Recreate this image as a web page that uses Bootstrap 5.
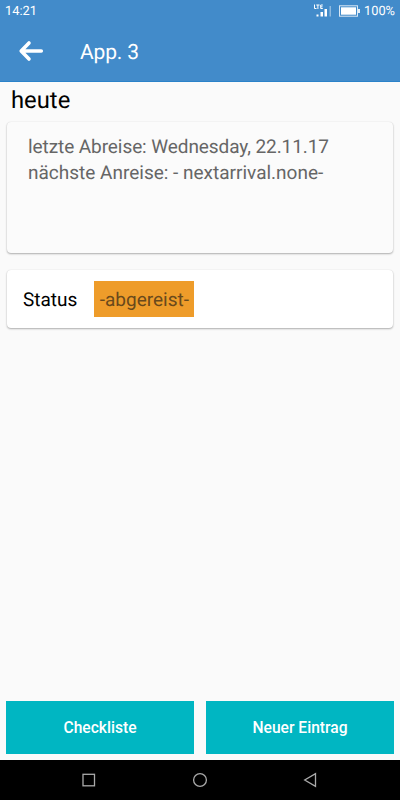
<!DOCTYPE html>
<html lang="de">
<head>
<meta charset="utf-8">
<meta name="viewport" content="width=device-width, initial-scale=1">
<title>App. 3</title>
<link href="https://cdn.jsdelivr.net/npm/bootstrap@5.3.0/dist/css/bootstrap.min.css" rel="stylesheet">
<style>
body { font-family: Roboto, sans-serif; background: #fafafa; color: #000; height: 800px; overflow: hidden; text-rendering: geometricPrecision; }
svg { display: block; flex: none; }
.app-head { background: #428bca; height: 82px; border-bottom: 1px solid #2a82c9; }
.status-bar { height: 21px; padding: 0 5px; font-size: 12.8px; line-height: 21px; }
.status-bar span { padding-top: 1px; }
.battery { margin: 0 4px 0 7px; }
.toolbar { height: 60px; padding: 0 19px 0 18px; }
.toolbar h1 { font-size: 21px; letter-spacing: -.15px; line-height: 26px; margin: 3px 0 0 36px; }
.day-title { font-size: 23.8px; line-height: 28px; margin: 4px 0 0 11px; height: 36px; }
.panel { margin: 0 7px; border: 0; border-radius: 4px; box-shadow: 0 1px 2px rgba(0,0,0,.3), 0 0 1px rgba(0,0,0,.12); }
.panel-stay { background: #fbfbfb; height: 131px; padding: 12px 21px; color: #666; font-size: 19px; line-height: 26px; }
.last-departure { letter-spacing: -.08px; }
.panel-status { height: 58px; margin-top: 17px; padding-left: 16px; font-size: 19px; }
.state-name { padding-top: 2px; }
.state-label { background: #ee9c2a; color: #69491c; height: 36px; line-height: 37px; margin-left: 17px; width: 100px; text-align: center; }
.actions { padding: 0 6px 6px; gap: 12px; }
.btn-action { --bs-btn-bg: #00b6c2; --bs-btn-color: #fff; --bs-btn-hover-bg: #00a5b0; --bs-btn-hover-color: #fff; height: 53px; font-size: 15.6px; font-weight: 500; border: 0; padding-top: 9px; }
.sys-nav { background: #000; height: 40px; }
</style>
</head>
<body class="d-flex flex-column">
<header class="app-head text-white flex-shrink-0">
  <div class="status-bar d-flex align-items-center">
    <span>14:21</span>
    <svg class="ms-auto" width="19" height="14" viewBox="0 0 19 14" fill="none">
      <path d="M1.500 .5V4.500H3.500M3.300 1H6.500M4.900 1V5M9.800 1H7.700V4.500H9.800M7.700 2.800H9.500" stroke="#fff"/>
      <path d="M3.500 10.500h2v2h-2zM7.500 8H10v4.500H7.500zM11.500 5H14v7.500h-2.500z" fill="#fff"/>
      <path d="M16.500 2H18v10.500h-1.500z" fill="#fff" opacity=".4"/>
    </svg>
    <svg class="battery" width="21" height="12" viewBox="0 0 21 12">
      <rect x=".5" y=".8" width="18" height="10.400" fill="none" stroke="#fff" stroke-opacity=".8"/>
      <rect x="2" y="2.300" width="15" height="7.400" fill="#fff"/>
      <path d="M19 4h2v4h-2z" fill="#fff" opacity=".85"/>
    </svg>
    <span>100%</span>
  </div>
  <div class="toolbar d-flex align-items-center">
    <svg width="26" height="22" viewBox="0 0 26 22" fill="none" stroke="#fff" stroke-width="3.600" stroke-linecap="round" stroke-linejoin="round"><path d="M11 3L3.200 11L11 19M3.500 11H23.300"/></svg>
    <h1 class="fw-normal">App. 3</h1>
  </div>
</header>
<main class="flex-grow-1">
  <h2 class="day-title fw-normal">heute</h2>
  <section class="card panel panel-stay">
    <div class="text-nowrap last-departure">letzte Abreise: Wednesday, 22.11.17</div>
    <div class="text-nowrap">nächste Anreise: - nextarrival.none-</div>
  </section>
  <section class="card panel panel-status flex-row align-items-center">
    <span class="state-name">Status</span><span class="state-label">-abgereist-</span>
  </section>
</main>
<div class="actions d-flex">
  <button type="button" class="btn btn-action rounded-0 flex-fill w-50">Checkliste</button>
  <button type="button" class="btn btn-action rounded-0 flex-fill w-50">Neuer Eintrag</button>
</div>
<nav class="sys-nav flex-shrink-0">
  <svg width="400" height="40" fill="none" stroke="#aaa" stroke-width="1.300">
    <rect x="83" y="14.300" width="11.500" height="11.500"/>
    <circle cx="200" cy="20" r="6.400"/>
    <path d="M315.500 13.600V26.400L304.700 20z"/>
  </svg>
</nav>
</body>
</html>
